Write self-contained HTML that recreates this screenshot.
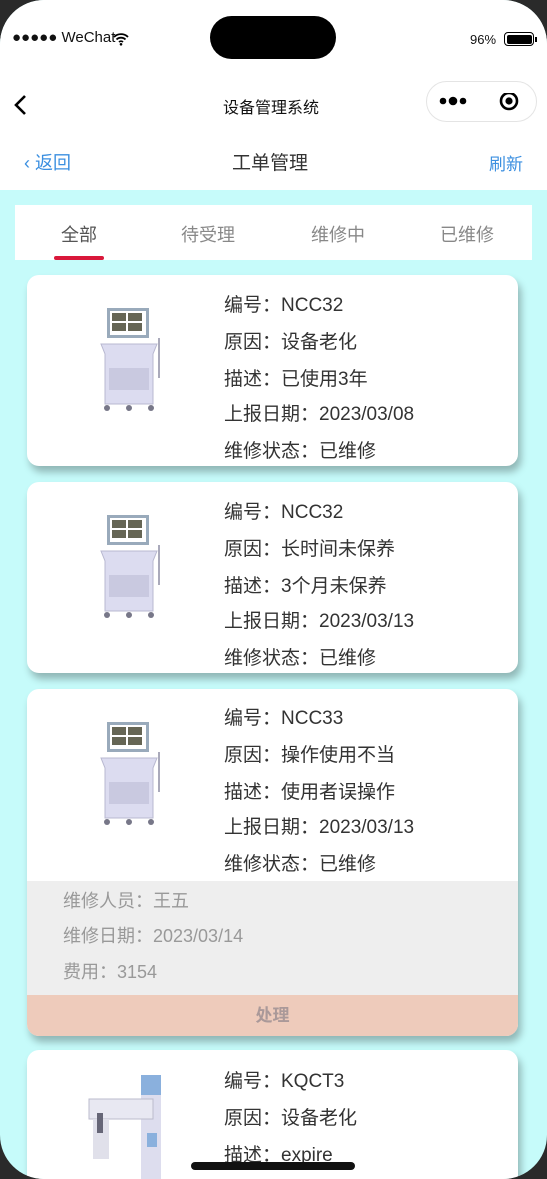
<!DOCTYPE html>
<html><head><meta charset="utf-8"><style>
*{margin:0;padding:0;box-sizing:border-box}
html,body{width:547px;height:1179px;overflow:hidden;background:#2a2a2a}
body{font-family:"Liberation Sans","Noto Sans CJK SC",sans-serif}
.phone{position:absolute;left:0;top:0;width:547px;height:1179px;border-radius:44px;overflow:hidden;background:#c6fbfa}
.top{position:absolute;left:0;top:0;width:547px;height:190px;background:#fff}
.island{position:absolute;left:210px;top:16px;width:126px;height:43px;border-radius:22px;background:#000}
.abs{position:absolute;white-space:nowrap}
.tabs{position:absolute;left:15px;top:205px;width:517px;height:55px;background:#fff}
.tab{position:absolute;top:16px;font-size:18px;color:#888;transform:translateX(-50%)}
.card{position:absolute;left:27px;width:491px;background:#fff;border-radius:12px;box-shadow:3px 6px 8px rgba(0,0,0,.28);overflow:hidden}
.ln{position:absolute;left:197px;font-size:19px;color:#333;white-space:nowrap}
.g{position:absolute;left:36px;font-size:18px;color:#999;white-space:nowrap}
</style></head><body><div class="phone">
<div class="top"></div>
<div class="island"></div>
<div class="abs" style="left:12px;top:29px;font-size:15px;color:#111">●●●●● WeChat</div>
<svg class="abs" style="left:113px;top:32px" width="16" height="14" viewBox="0 0 16 14"><path d="M1 5a10 10 0 0 1 14 0M3.5 7.5a6.5 6.5 0 0 1 9 0M6 10a3 3 0 0 1 4 0" stroke="#000" stroke-width="1.8" fill="none"/><circle cx="8" cy="12.3" r="1.3"/></svg>
<div class="abs" style="left:470px;top:32px;font-size:13px;color:#111">96%</div>
<div class="abs" style="left:504px;top:32px;width:30px;height:14px;border:1.5px solid #000;border-radius:4px;padding:1.5px"><div style="width:100%;height:100%;background:#000;border-radius:2px"></div></div>
<div class="abs" style="left:535px;top:37px;width:2px;height:5px;background:#000"></div>
<svg class="abs" style="left:12px;top:94px" width="16" height="22" viewBox="0 0 16 22"><path d="M13 2L4 11l9 9" stroke="#000" stroke-width="2.6" fill="none"/></svg>
<div class="abs" style="left:223px;top:94px;font-size:16px;color:#111">设备管理系统</div>
<div class="abs" style="left:426px;top:81px;width:111px;height:41px;border:1px solid #e4e4e4;border-radius:21px;background:#fff"></div>
<svg class="abs" style="left:438px;top:93px" width="90" height="18" viewBox="0 0 90 18"><circle cx="5" cy="8" r="3.3"/><circle cx="15" cy="8" r="4.3"/><circle cx="25" cy="8" r="3.3"/><circle cx="71" cy="8" r="8" fill="none" stroke="#000" stroke-width="2.6"/><circle cx="71" cy="8" r="3.6"/></svg>
<div class="abs" style="left:24px;top:149px;font-size:18px;color:#3b8fe0">‹ 返回</div>
<div class="abs" style="left:232px;top:148px;font-size:19px;color:#333">工单管理</div>
<div class="abs" style="left:489px;top:150px;font-size:17px;color:#3b8fe0">刷新</div>
<div class="tabs">
<div class="tab" style="left:64px;color:#555">全部</div>
<div class="tab" style="left:193px">待受理</div>
<div class="tab" style="left:323px">维修中</div>
<div class="tab" style="left:452px">已维修</div>
<div style="position:absolute;left:39px;top:51px;width:50px;height:4px;border-radius:2px;background:#d9183a"></div>
</div>

<svg width="0" height="0" style="position:absolute"><defs><g id="cart">
<rect x="10" y="0" width="42" height="30" fill="#9ab" /><rect x="13" y="3" width="36" height="24" fill="#fff"/>
<rect x="15" y="5" width="14" height="8" fill="#665"/><rect x="31" y="5" width="14" height="8" fill="#665"/><rect x="15" y="15" width="14" height="8" fill="#665"/><rect x="31" y="15" width="14" height="8" fill="#665"/>
<path d="M4 36h56l-4 10v50H8V46z" fill="#dcdcf0" stroke="#b8b8d0"/><rect x="12" y="60" width="40" height="22" fill="#c9c9e0"/>
<path d="M62 30v40" stroke="#aab" stroke-width="2" fill="none"/>
<circle cx="10" cy="100" r="3" fill="#778"/><circle cx="54" cy="100" r="3" fill="#778"/><circle cx="32" cy="100" r="3" fill="#778"/>
</g></defs></svg>

<div class="card" style="top:275px;height:191px">
<svg style="position:absolute;left:70px;top:33px" width="72" height="110"><use href="#cart"/></svg>
<div class="ln" style="top:15px">编号：NCC32</div>
<div class="ln" style="top:52px">原因：设备老化</div>
<div class="ln" style="top:89px">描述：已使用3年</div>
<div class="ln" style="top:124px">上报日期：2023/03/08</div>
<div class="ln" style="top:161px">维修状态：已维修</div>
</div>
<div class="card" style="top:482px;height:191px">
<svg style="position:absolute;left:70px;top:33px" width="72" height="110"><use href="#cart"/></svg>
<div class="ln" style="top:15px">编号：NCC32</div>
<div class="ln" style="top:52px">原因：长时间未保养</div>
<div class="ln" style="top:89px">描述：3个月未保养</div>
<div class="ln" style="top:124px">上报日期：2023/03/13</div>
<div class="ln" style="top:161px">维修状态：已维修</div>
</div>
<div class="card" style="top:689px;height:347px">
<svg style="position:absolute;left:70px;top:33px" width="72" height="110"><use href="#cart"/></svg>
<div class="ln" style="top:14px">编号：NCC33</div>
<div class="ln" style="top:51px">原因：操作使用不当</div>
<div class="ln" style="top:88px">描述：使用者误操作</div>
<div class="ln" style="top:123px">上报日期：2023/03/13</div>
<div class="ln" style="top:160px">维修状态：已维修</div>
<div style="position:absolute;left:0;top:192px;width:491px;height:114px;background:#eee">
<div class="g" style="top:6px">维修人员：王五</div>
<div class="g" style="top:41px">维修日期：2023/03/14</div>
<div class="g" style="top:77px">费用：3154</div>
</div>
<div style="position:absolute;left:0;top:306px;width:491px;height:41px;background:#eecbbb;text-align:center;line-height:41px;font-size:17px;font-weight:bold;color:#a99">处理</div>
</div>
<div class="card" style="top:1050px;height:140px">
<svg style="position:absolute;left:58px;top:25px" width="100" height="110" viewBox="0 0 100 110"><rect x="56" y="0" width="20" height="110" fill="#dde" /><rect x="56" y="0" width="20" height="20" fill="#8ab0dd"/><path d="M4 24h64v20H4z" fill="#e8e8f2" stroke="#bbc"/><rect x="8" y="44" width="16" height="40" fill="#e0e0ea"/><rect x="12" y="38" width="6" height="20" fill="#667"/><rect x="62" y="58" width="10" height="14" fill="#8ab0dd"/></svg>
<div class="ln" style="top:16px">编号：KQCT3</div>
<div class="ln" style="top:53px">原因：设备老化</div>
<div class="ln" style="top:90px">描述：expire</div>
</div>
<div class="abs" style="left:191px;top:1162px;width:164px;height:8px;border-radius:4px;background:#111"></div>
</div></body></html>
